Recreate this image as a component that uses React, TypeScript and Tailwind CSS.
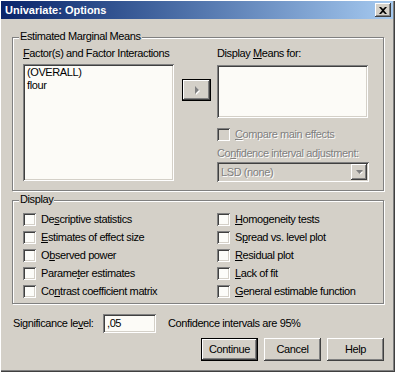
import React from "react"

const raised =
  "shadow-[inset_-1px_-1px_0_#404040,inset_1px_1px_0_#ffffff,inset_-2px_-2px_0_#808080,inset_2px_2px_0_#d4d0c8]"
const sunken =
  "shadow-[inset_1px_1px_0_#808080,inset_-1px_-1px_0_#ffffff,inset_2px_2px_0_#404040,inset_-2px_-2px_0_#d4d0c8]"
const etched = "border border-[#808080] shadow-[inset_1px_1px_0_#ffffff,1px_1px_0_#ffffff]"
const grayText = "text-[#808080] [text-shadow:1px_1px_0_#ffffff]"

function U({ children }: { children: React.ReactNode }) {
  return <span className="underline underline-offset-[1px]">{children}</span>
}

function CheckBox({ disabled }: { disabled?: boolean }) {
  return <div className={`w-[13px] h-[13px] shrink-0 ${disabled ? "bg-[#d4d0c8]" : "bg-[#fcfcf9]"} ${sunken}`} />
}

function Check({ label, disabled }: { label: React.ReactNode; disabled?: boolean }) {
  return (
    <div className="flex items-center h-[18px] gap-[5px]">
      <CheckBox disabled={disabled} />
      <span className={disabled ? grayText : ""}>{label}</span>
    </div>
  )
}

function GroupBox({ title, className, children }: { title: string; className: string; children: React.ReactNode }) {
  return (
    <div className={`relative w-[372px] ${etched} ${className}`}>
      <span className="absolute -top-[8px] left-[6px] bg-[#d4d0c8] px-[1px] leading-[13px]">{title}</span>
      {children}
    </div>
  )
}

export default function App() {
  return (
    <div
      className="relative w-[395px] h-[372px] bg-[#d4d0c8] text-black text-[11px] leading-[13px] tracking-[-0.4px] shadow-[inset_1px_1px_0_#ffffff,inset_-1px_-1px_0_#404040,inset_-2px_-2px_0_#808080] select-none"
      style={{ fontFamily: '"Liberation Sans", Arial, sans-serif' }}
    >
      {/* Title bar */}
      <div className="ml-[1px] pt-[1px] w-[392px]">
        <div className="h-[18px] flex items-center justify-between bg-gradient-to-r from-[#0a246a] to-[#a6caf0] pl-[4px] pr-[2px]">
          <span className="text-white font-bold tracking-normal">Univariate: Options</span>
          <div className={`w-[16px] h-[14px] bg-[#d4d0c8] flex items-center justify-center ${raised}`}>
            <svg width="8" height="7" viewBox="0 0 8 7">
              <path d="M0 0h2l2 2 2-2h2L5 3.5 8 7H6L4 5 2 7H0l3-3.5z" fill="#000" />
            </svg>
          </div>
        </div>
      </div>

      <div className="pl-[12px]">
        {/* Estimated Marginal Means */}
        <GroupBox title="Estimated Marginal Means" className="mt-[18px] h-[154px]">
          <div className="flex items-start pt-[9px] pl-[10px]">
            <div className="w-[151px]">
              <div>
                <U>F</U>actor(s) and Factor Interactions
              </div>
              <div className={`mt-[4px] h-[117px] bg-[#fcfbf7] pl-[4px] pt-[2px] ${sunken}`}>
                <div>(OVERALL)</div>
                <div>flour</div>
              </div>
            </div>

            <div
              className={`ml-[8px] mt-[32px] w-[29px] h-[22px] border border-black bg-[#d4d0c8] flex items-center justify-center ${raised}`}
            >
              <svg width="6" height="10" viewBox="0 0 6 10">
                <path d="M1 1 L5 5 L1 9 Z" fill="#ffffff" transform="translate(1 1)" />
                <path d="M1 1 L5 5 L1 9 Z" fill="#808080" />
              </svg>
            </div>

            <div className="ml-[6px] w-[152px]">
              <div>
                Display <U>M</U>eans for:
              </div>
              <div className={`mt-[5px] w-[151px] h-[53px] bg-[#fcfbf7] ${sunken}`} />
              <div className="mt-[7px]">
                <Check
                  disabled
                  label={
                    <>
                      <U>C</U>ompare main effects
                    </>
                  }
                />
              </div>
              <div className={`mt-[4px] ${grayText}`}>
                Co<U>n</U>fidence interval adjustment:
              </div>
              <div className={`mt-[2px] w-[152px] h-[20px] bg-[#d4d0c8] flex items-center justify-between pl-[4px] pr-[2px] ${sunken}`}>
                <span className={grayText}>LSD (none)</span>
                <div className={`w-[16px] h-[16px] bg-[#d4d0c8] flex items-center justify-center ${raised}`}>
                  <svg width="7" height="5" viewBox="0 0 7 5">
                    <path d="M1 1 L6 1 L3.5 3.5 Z" fill="#ffffff" transform="translate(1 1)" />
                    <path d="M0 0 L7 0 L3.5 4 Z" fill="#808080" />
                  </svg>
                </div>
              </div>
            </div>
          </div>
        </GroupBox>

        {/* Display */}
        <GroupBox title="Display" className="mt-[9px] h-[104px]">
          <div className="flex pt-[9px] pl-[10px]">
            <div className="w-[194px]">
              <Check label={<>De<U>s</U>criptive statistics</>} />
              <Check label={<><U>E</U>stimates of effect size</>} />
              <Check label={<>O<U>b</U>served power</>} />
              <Check label={<>Parame<U>t</U>er estimates</>} />
              <Check label={<>Co<U>n</U>trast coefficient matrix</>} />
            </div>
            <div>
              <Check label={<><U>H</U>omogeneity tests</>} />
              <Check label={<>S<U>p</U>read vs. level plot</>} />
              <Check label={<><U>R</U>esidual plot</>} />
              <Check label={<><U>L</U>ack of fit</>} />
              <Check label={<><U>G</U>eneral estimable function</>} />
            </div>
          </div>
        </GroupBox>

        {/* Significance */}
        <div className="flex items-center mt-[10px] h-[19px]">
          <span className="ml-[1px] w-[90px]">
            Significance le<U>v</U>el:
          </span>
          <div className={`w-[53px] h-[19px] bg-[#fcfbf7] pl-[4px] flex items-center ${sunken}`}>,05</div>
          <span className="ml-[12px]">Confidence intervals are 95%</span>
        </div>

        {/* Buttons */}
        <div className="mt-[5px] w-[372px] flex justify-end gap-[6px]">
          <button className={`w-[57px] h-[23px] border border-black bg-[#d4d0c8] ${raised}`}>Continue</button>
          <button className={`w-[57px] h-[23px] bg-[#d4d0c8] ${raised}`}>Cancel</button>
          <button className={`w-[57px] h-[23px] bg-[#d4d0c8] ${raised}`}>Help</button>
        </div>
      </div>
    </div>
  )
}
